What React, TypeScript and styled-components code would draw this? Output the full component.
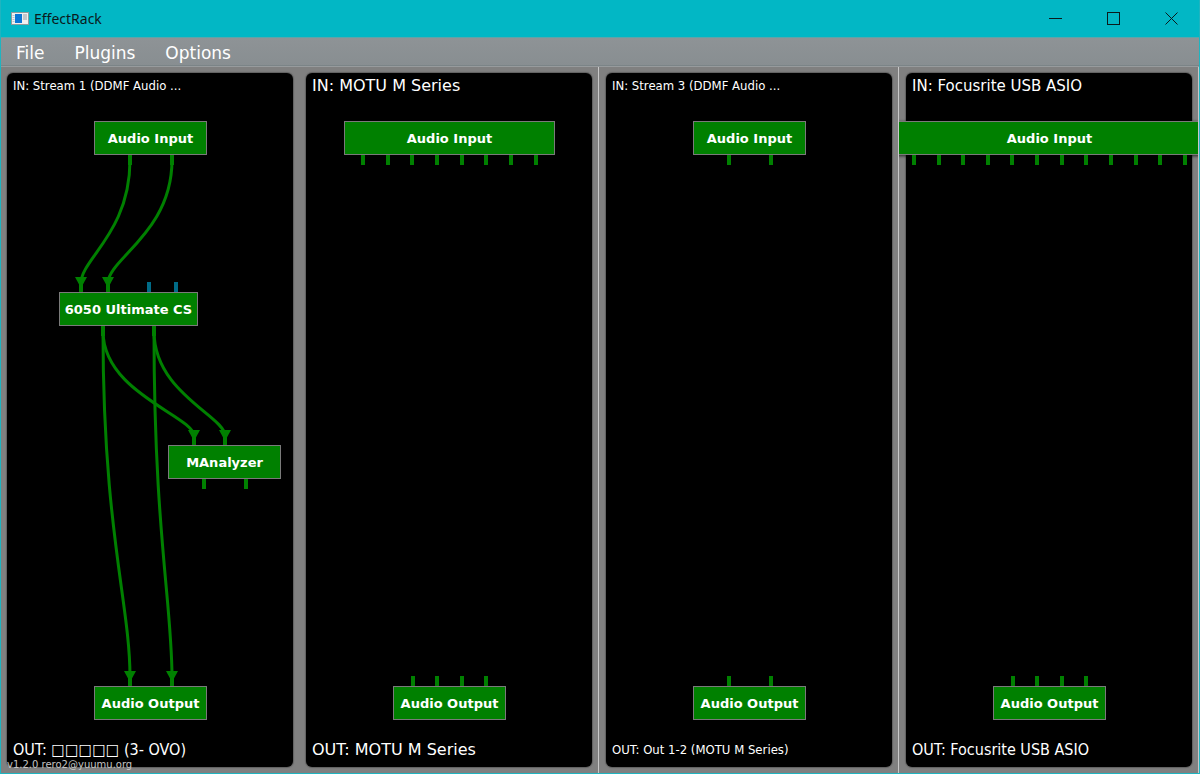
import React, { useLayoutEffect, useRef, useState } from "react";
import styled, { createGlobalStyle } from "styled-components";

type Side = "top" | "bottom";
type Face = "wide" | "regular" | "medium" | "narrow";

interface PinDef {
  side: Side;
  offset: number;
  midi?: boolean;
}

interface NodeDef {
  id: string;
  label: string;
  x: number;
  y: number;
  width: number;
  pins: PinDef[];
}

interface WireDef {
  from: [string, number];
  to: [string, number];
}

interface StreamDef {
  input: string;
  inputFace: Face;
  output: string;
  outputFace: Face;
  nodes: NodeDef[];
  wires: WireDef[];
}

const NODE_HEIGHT = 34;
const PIN_HALF = 2;

const pins = (side: Side, offsets: number[], midi = false): PinDef[] =>
  offsets.map((offset) => ({ side, offset, midi }));

const audioInput = (width: number, offsets: number[]): NodeDef => ({
  id: "in",
  label: "Audio Input",
  x: 0.503,
  y: 0.1,
  width,
  pins: pins("bottom", offsets),
});

const audioOutput = (offsets: number[]): NodeDef => ({
  id: "out",
  label: "Audio Output",
  x: 0.503,
  y: 0.901,
  width: 113,
  pins: pins("top", offsets),
});

const STREAMS: StreamDef[] = [
  {
    input: "IN: Stream 1 (DDMF Audio ...",
    inputFace: "narrow",
    output: "OUT: □□□□□ (3- OVO)",
    outputFace: "medium",
    nodes: [
      audioInput(113, [34, 76]),
      {
        id: "cs",
        label: "6050 Ultimate CS",
        x: 0.43,
        y: 0.343,
        width: 139,
        pins: [
          ...pins("top", [20, 47]),
          ...pins("top", [88, 115], true),
          ...pins("bottom", [42, 93]),
        ],
      },
      {
        id: "analyzer",
        label: "MAnalyzer",
        x: 0.751,
        y: 0.56,
        width: 113,
        pins: [...pins("top", [24, 55]), ...pins("bottom", [34, 76])],
      },
      audioOutput([34, 76]),
    ],
    wires: [
      { from: ["in", 0], to: ["cs", 0] },
      { from: ["in", 1], to: ["cs", 1] },
      { from: ["cs", 4], to: ["analyzer", 0] },
      { from: ["cs", 5], to: ["analyzer", 1] },
      { from: ["cs", 4], to: ["out", 0] },
      { from: ["cs", 5], to: ["out", 1] },
    ],
  },
  {
    input: "IN: MOTU M Series",
    inputFace: "wide",
    output: "OUT: MOTU M Series",
    outputFace: "wide",
    nodes: [
      audioInput(211, [17, 42, 66, 91, 116, 140, 165, 190]),
      audioOutput([18, 42, 67, 91]),
    ],
    wires: [],
  },
  {
    input: "IN: Stream 3 (DDMF Audio ...",
    inputFace: "narrow",
    output: "OUT: Out 1-2 (MOTU M Series)",
    outputFace: "narrow",
    nodes: [audioInput(113, [34, 76]), audioOutput([34, 76])],
    wires: [],
  },
  {
    input: "IN: Focusrite USB ASIO",
    inputFace: "regular",
    output: "OUT: Focusrite USB ASIO",
    outputFace: "medium",
    nodes: [
      audioInput(311, [18, 43, 67, 92, 116, 141, 166, 190, 215, 240, 264, 289]),
      audioOutput([18, 42, 67, 91]),
    ],
    wires: [],
  },
];

const GlobalStyle = createGlobalStyle`
  *, *::before, *::after { box-sizing: border-box; }
  body { margin: 0; background: #808080; }
  button { border: 0; padding: 0; background: none; font: inherit; color: inherit; }
`;

const Window = styled.div`
  position: relative;
  display: flex;
  flex-direction: column;
  min-height: 100vh;
  padding-bottom: 1px;
  background: #808080;
  font-family: "DejaVu Sans", Verdana, sans-serif;
  color: #fff;

  &::after {
    content: "";
    position: absolute;
    inset: 0;
    border: 1px solid #1fb4c0;
    border-top: 0;
    pointer-events: none;
  }
`;

const TitleBar = styled.header`
  display: flex;
  align-items: center;
  height: 38px;
  padding-left: 11px;
  background: #02b7c5;
  border-bottom: 1px solid #5ea4aa;
  color: #0b1a1c;
`;

const AppIcon = styled.svg`
  display: block;
  width: 18px;
  height: 14px;
  margin-right: 5px;
`;

const Title = styled.h1`
  flex: 1;
  margin: 0;
  font: 400 14px/20px "Noto Sans", "Open Sans", sans-serif;
`;

const CaptionButton = styled.button`
  display: grid;
  place-items: center;
  width: 58px;
  height: 37px;
`;

const MenuBar = styled.nav`
  display: flex;
  align-items: center;
  height: 29px;
  padding-left: 1px;
  background: linear-gradient(#8e9396, #888e91);
  border-bottom: 1px solid #979b9d;
  box-shadow: inset 0 -1px #7b8487;
`;

const MenuItem = styled.button`
  height: 28px;
  padding: 1px 15px 0;
  font-size: 17px;
  line-height: 28px;
`;

const Rack = styled.main`
  display: flex;
  flex: 1;
  padding-right: 1px;
`;

const Column = styled.section<{ $divided: boolean }>`
  position: relative;
  display: flex;
  flex: 1 1 0;
  min-width: 0;
  min-height: 400px;
  padding: 6px 6px 6px 7px;
  overflow: hidden;
  border-right: ${(p) => (p.$divided ? "1px solid #c8c8c8" : "0")};
`;

const Panel = styled.div`
  display: flex;
  flex: 1;
  flex-direction: column;
  justify-content: space-between;
  min-width: 0;
  padding: 3px 6px 7px;
  border-radius: 6px;
  background: #000;
  box-shadow: 0 0 1px 1px #606060;
`;

const FACES: Record<Face, string> = {
  wide: '16px/20px "DejaVu Sans", Verdana, sans-serif',
  regular: '15px/20px "DejaVu Sans", Verdana, sans-serif',
  medium: '16px/20px "DejaVu Sans Condensed", "DejaVu Sans", sans-serif',
  narrow: '13px/20px "DejaVu Sans Condensed", "DejaVu Sans", sans-serif',
};

const DeviceName = styled.div<{ $face: Face }>`
  overflow: hidden;
  white-space: nowrap;
  font: ${(p) => FACES[p.$face]};
`;

const Graph = styled.div`
  position: absolute;
  inset: 0;
`;

const Wires = styled.svg`
  position: absolute;
  inset: 0;
  width: 100%;
  height: 100%;
  fill: none;
  stroke: #008000;
  stroke-width: 3;
`;

const NodeBox = styled.div`
  position: absolute;
  display: grid;
  place-items: center;
  height: ${NODE_HEIGHT}px;
  padding-top: 1px;
  border: 1px solid #7a7a7a;
  background: #008000;
  box-shadow: 0 1px 3px rgba(0, 0, 0, 0.7);
  font-size: 13px;
  font-weight: 700;
  line-height: 20px;
  white-space: nowrap;
`;

const Pin = styled.i<{ $side: Side; $midi?: boolean }>`
  position: absolute;
  ${(p) => (p.$side === "top" ? "bottom" : "top")}: 33px;
  width: 4px;
  height: 10px;
  margin-left: -1px;
  background: ${(p) => (p.$midi ? "#006b87" : "#008000")};
`;

const Version = styled.footer`
  position: absolute;
  left: 7px;
  bottom: 2px;
  font-size: 10px;
  line-height: 14px;
  color: #c4c4c4;
`;

interface Size {
  width: number;
  height: number;
}

function nodeOrigin(node: NodeDef, size: Size) {
  return {
    left: Math.round(node.x * size.width - node.width / 2),
    top: Math.round(node.y * size.height - NODE_HEIGHT / 2),
  };
}

function GraphView({ nodes, wires }: Pick<StreamDef, "nodes" | "wires">) {
  const ref = useRef<HTMLDivElement>(null);
  const [size, setSize] = useState<Size | null>(null);

  useLayoutEffect(() => {
    const el = ref.current;
    if (!el) return;
    const measure = () => setSize({ width: el.clientWidth, height: el.clientHeight });
    measure();
    const observer = new ResizeObserver(measure);
    observer.observe(el);
    return () => observer.disconnect();
  }, []);

  const pinPoint = ([id, index]: [string, number], s: Size) => {
    const node = nodes.find((n) => n.id === id)!;
    const pin = node.pins[index];
    const origin = nodeOrigin(node, s);
    return {
      x: origin.left + pin.offset + PIN_HALF,
      y: pin.side === "top" ? origin.top - 5 : origin.top + NODE_HEIGHT + 5,
    };
  };

  return (
    <Graph ref={ref}>
      {size && (
        <>
          <Wires aria-hidden="true">
            {wires.map((wire, i) => {
              const a = pinPoint(wire.from, size);
              const b = pinPoint(wire.to, size);
              const dy = b.y - a.y;
              return (
                <g key={i}>
                  <path
                    d={`M${a.x} ${a.y}C${a.x} ${a.y + dy * 0.57} ${b.x} ${a.y + dy * 0.78} ${b.x} ${b.y - 4}V${b.y}`}
                  />
                  <path
                    d={`M${b.x - 6} ${b.y - 10}h12L${b.x} ${b.y + 1}z`}
                    fill="#008000"
                    stroke="none"
                  />
                </g>
              );
            })}
          </Wires>
          {nodes.map((node) => (
            <NodeBox key={node.id} style={{ ...nodeOrigin(node, size), width: node.width }}>
              {node.label}
              {node.pins.map((pin, i) => (
                <Pin key={i} $side={pin.side} $midi={pin.midi} style={{ left: pin.offset }} />
              ))}
            </NodeBox>
          ))}
        </>
      )}
    </Graph>
  );
}

export default function App() {
  return (
    <>
      <GlobalStyle />
      <Window>
        <TitleBar>
          <AppIcon viewBox="0 0 18 14" aria-hidden="true">
            <rect x="0.5" y="0.5" width="17" height="12" fill="#f0f0f0" stroke="#8f9b9d" />
            <rect x="4" y="2" width="7" height="9" fill="#0a78d6" />
            <path d="M1.5 3.5h2M1.5 5.5h2M1.5 7.5h2M1.5 9.5h2" stroke="#b9c4cc" />
            <rect x="12" y="2" width="4" height="6" fill="#c3c8cb" />
          </AppIcon>
          <Title>EffectRack</Title>
          <CaptionButton aria-label="Minimize">
            <svg width="13" height="13" fill="none" stroke="#0b1a1c">
              <path d="M0 6.5h13" />
            </svg>
          </CaptionButton>
          <CaptionButton aria-label="Maximize">
            <svg width="13" height="13" fill="none" stroke="#0b1a1c">
              <rect x="0.5" y="0.5" width="12" height="12" />
            </svg>
          </CaptionButton>
          <CaptionButton aria-label="Close">
            <svg width="13" height="13" fill="none" stroke="#0b1a1c">
              <path d="M0.5 0.5l12 12M12.5 0.5l-12 12" />
            </svg>
          </CaptionButton>
        </TitleBar>
        <MenuBar>
          <MenuItem>File</MenuItem>
          <MenuItem>Plugins</MenuItem>
          <MenuItem>Options</MenuItem>
        </MenuBar>
        <Rack>
          {STREAMS.map((stream, i) => (
            <Column key={stream.input} $divided={i > 0}>
              <Panel>
                <DeviceName $face={stream.inputFace}>{stream.input}</DeviceName>
                <DeviceName $face={stream.outputFace}>{stream.output}</DeviceName>
              </Panel>
              <GraphView nodes={stream.nodes} wires={stream.wires} />
            </Column>
          ))}
        </Rack>
        <Version>v1.2.0 rero2@yuumu.org</Version>
      </Window>
    </>
  );
}
